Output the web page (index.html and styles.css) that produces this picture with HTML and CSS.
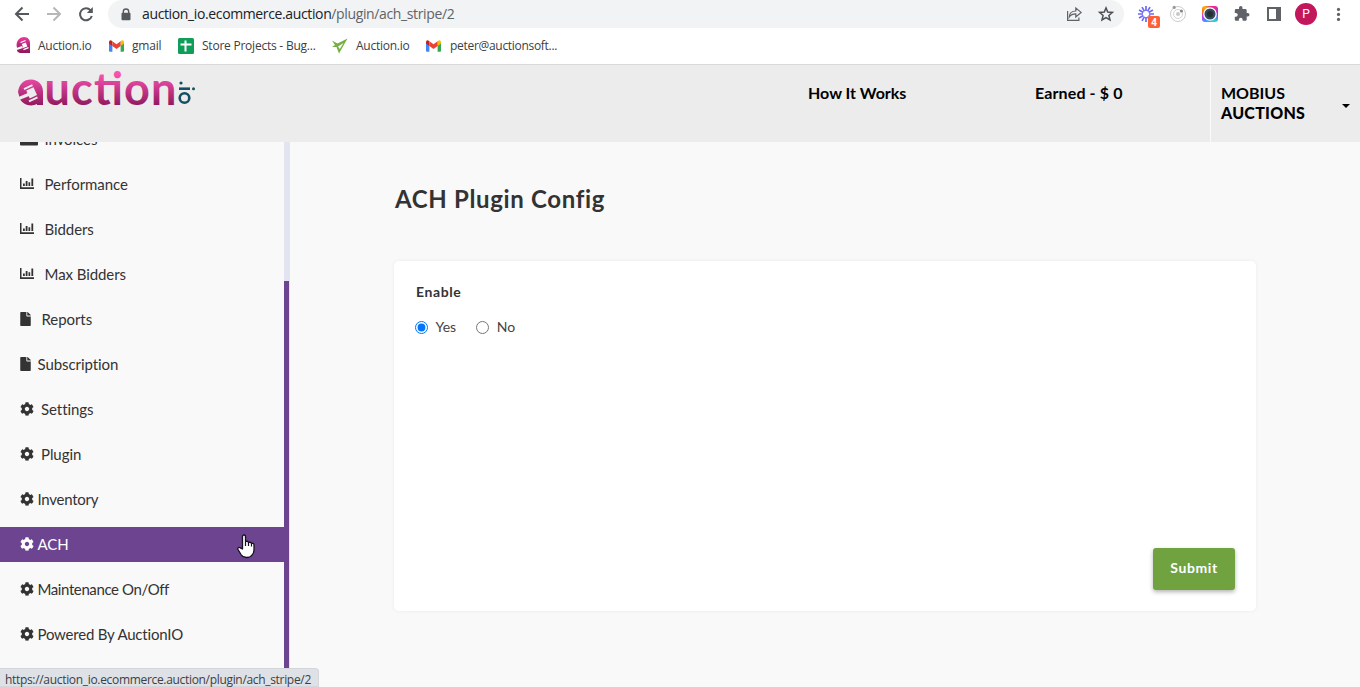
FILE: index.html
```html
<!DOCTYPE html>
<html lang="en">
<head>
<meta charset="utf-8">
<title>ACH Plugin Config</title>
<link rel="stylesheet" href="styles.css">
</head>
<body>
<svg class="defs" width="0" height="0" aria-hidden="true">
  <defs>
    <linearGradient id="pink" gradientUnits="userSpaceOnUse" x1="0" y1="2" x2="0" y2="36"><stop offset="0" stop-color="#f953b0"/><stop offset="1" stop-color="#891458"/></linearGradient>
    <linearGradient id="badge" x1="0" y1="0" x2="0" y2="1"><stop offset="0" stop-color="#e83b98"/><stop offset="1" stop-color="#8c175c"/></linearGradient>
    <symbol id="gear" viewBox="0 0 512 512"><path fill="currentColor" d="M487.4 315.7l-42.6-24.6c4.3-23.2 4.3-47 0-70.2l42.6-24.6c4.9-2.8 7.1-8.6 5.5-14-11.1-35.6-30-67.8-54.7-94.6-3.8-4.1-10-5.1-14.8-2.3L380.8 110c-17.900-15.400-38.500-27.300-60.800-35.100V25.800c0-5.600-3.900-10.500-9.400-11.700-36.700-8.200-74.300-7.800-109.200 0-5.500 1.200-9.400 6.100-9.400 11.700V75c-22.200 7.900-42.800 19.800-60.800 35.100L88.700 85.500c-4.900-2.800-11-1.900-14.800 2.300-24.700 26.700-43.600 58.900-54.700 94.600-1.700 5.400.6 11.200 5.500 14L67.300 221c-4.300 23.200-4.300 47 0 70.200l-42.600 24.600c-4.900 2.800-7.100 8.600-5.500 14 11.100 35.600 30 67.800 54.700 94.600 3.800 4.100 10 5.100 14.800 2.300l42.600-24.600c17.900 15.400 38.500 27.300 60.800 35.100v49.200c0 5.600 3.900 10.500 9.400 11.700 36.700 8.200 74.300 7.800 109.200 0 5.500-1.200 9.400-6.100 9.400-11.700v-49.200c22.200-7.900 42.800-19.800 60.800-35.100l42.600 24.600c4.900 2.800 11 1.900 14.800-2.300 24.700-26.700 43.600-58.900 54.700-94.600 1.500-5.500-.7-11.300-5.600-14.100zM256 336c-44.100 0-80-35.900-80-80s35.900-80 80-80 80 35.900 80 80-35.900 80-80 80z"/></symbol>
    <symbol id="chart" viewBox="0 0 14 11"><path fill="currentColor" d="M0 0h1.500v9.300H14V11H0zM3 5.500h1.800v2.500H3zM5.700 3h1.800v5H5.700zM8.500 4.200h1.700V8H8.500zM11.400 .6h1.800V8h-1.800z"/></symbol>
    <symbol id="file" viewBox="0 0 384 512"><path fill="currentColor" d="M224 136V0H24C10.700 0 0 10.700 0 24v464c0 13.300 10.700 24 24 24h336c13.300 0 24-10.700 24-24V160H248c-13.200 0-24-10.800-24-24zm160-14.100v6.100H256V0h6.100c6.400 0 12.500 2.500 17 7l97.900 98c4.500 4.500 7 10.600 7 16.900z"/></symbol>
    <symbol id="gmail" viewBox="0 0 16 12"><path fill="#4285f4" d="M0 1.500V11q0 1 1 1h2.600V5z"/><path fill="#34a853" d="M12.400 5v7H15q1 0 1-1V1.500z"/><path fill="#fbbc04" d="M12.400.9v5L16 3.200V1.800Q15.700-.7 13.500.1z"/><path fill="#c5221f" d="M3.600.9v5L0 3.200V1.800Q.3-.7 2.500.1z"/><path fill="#ea4335" d="M3.600 5.900v-5L8 4.200 12.400.9v5L8 9.200z"/></symbol>
  </defs>
</svg>

<div class="browser">
  <div class="toolbar">
    <div class="nav">
      <svg width="32" height="28" fill="none" stroke="#55585c" stroke-width="2"><path d="M29 14H16.500M22.500 7.500 16 14l6.500 6.500"/></svg>
      <svg width="32" height="28" fill="none" stroke="#b5b7b9" stroke-width="2"><path d="M8 14h12.500M14.500 7.500 21 14l-6.500 6.500"/></svg>
      <svg width="32" height="28" fill="none" stroke="#55585c" stroke-width="2"><path d="M19.600 10.300A6 6 0 1 0 20.800 16"/><path d="M21.800 7v6h-6z" fill="#55585c" stroke="none"/></svg>
    </div>
    <div class="omnibox">
      <svg class="lock" width="10" height="13"><path d="M2.300 5V3.700a2.700 2.700 0 0 1 5.400 0V5" fill="none" stroke="#55585c" stroke-width="1.400"/><rect x=".5" y="4.800" width="9" height="7.500" rx="1" fill="#55585c"/></svg>
      <div class="url">auction_io.ecommerce.auction<span>/plugin/ach_stripe/2</span></div>
      <svg width="32" height="28" fill="none" stroke="#5f6368" stroke-width="1.200"><path d="M9.600 11v9.400h11.300v-3M11.300 17c.2-4 2.600-6 6.500-6V8l5.300 4.400-5.300 4.500v-3c-3 0-5 .8-6.500 3.100z"/></svg>
      <svg width="32" height="28" fill="none" stroke="#4d5156" stroke-width="1.500"><path d="m16 7.900 1.700 4.100 4.700.4-3.500 3 1.100 4.500-4-2.400-4 2.400 1.100-4.500-3.500-3 4.700-.4z"/></svg>
    </div>
    <div class="extensions">
      <svg width="32" height="28"><g stroke="#6d68f2" stroke-width="1.700"><path d="M16 6v5M16 17v5M8 14h5M19 14h5M12 7.070l2.500 4.330M17.500 16.600l2.500 4.330M9.070 10l4.330 2.500M18.600 15.500l4.330 2.500M9.070 18l4.330-2.500M18.600 12.500l4.330-2.500M12 20.930l2.500-4.330M17.500 11.400 20 7.070"/></g><rect x="18" y="16" width="12" height="12" rx="2" fill="#ff6038"/><text class="count" x="24" y="26">4</text></svg>
      <svg width="32" height="28" fill="none"><circle cx="16" cy="14" r="7.500" stroke="#ccc"/><circle cx="16" cy="14" r="4.500" stroke="#d3d3d3"/><circle cx="16" cy="14" r="2" fill="#c8c8c8"/><circle cx="19.400" cy="11" r="1.600" fill="#888"/><circle cx="12.200" cy="7.400" r="1.600" fill="#999"/></svg>
      <div class="cell"><div class="camera"><svg width="16" height="16"><circle cx="8" cy="8" r="6.200" fill="#34495a" stroke="#fff" stroke-width="1.300"/><circle cx="8" cy="8" r="3" fill="#222e39"/></svg></div></div>
      <svg width="32" height="28"><path transform="translate(7.400 5.400) scale(.7)" fill="#5f6368" d="M20.500 11H19V7c0-1.100-.9-2-2-2h-4V3.500a2.500 2.500 0 0 0-5 0V5H4c-1.100 0-2 .9-2 2v3.800h1.500a2.700 2.700 0 0 1 0 5.400H2V20c0 1.100.9 2 2 2h3.800v-1.500a2.700 2.700 0 0 1 5.400 0V22H17c1.100 0 2-.9 2-2v-4h1.500a2.500 2.500 0 0 0 0-5z"/></svg>
      <svg width="32" height="28"><path fill="#5f6368" fill-rule="evenodd" d="M9 7h14v14H9zM11 9v10h7V9z"/></svg>
      <div class="cell"><div class="avatar">P</div></div>
      <svg width="32" height="28" fill="#5f6368"><circle cx="16.500" cy="9.400" r="1.600"/><circle cx="16.500" cy="14.400" r="1.600"/><circle cx="16.500" cy="19.400" r="1.600"/></svg>
    </div>
  </div>
  <div class="bookmarks">
    <div class="bm bm-a"><svg width="16" height="17"><path d="M2 11C0 3 6 0 9 0c4 0 6 3 6 6v10H5q-4-1-3-5z" fill="url(#badge)"/><path d="m0 11.500 7-2.500 1 2-7 2.200z" fill="#fff"/><path d="m5.500 5.500 5-2M8.500 12.700l5-2" stroke="#fff" stroke-width="1.300"/><path d="m6.800 7 4-1.600 1.500 4-4 1.600z" fill="#fff"/></svg><span>Auction.io</span></div>
    <div class="bm bm-b"><svg width="15" height="12"><use href="#gmail"/></svg><span>gmail</span></div>
    <div class="bm bm-c"><svg width="16" height="16"><rect width="16" height="16" rx="1.500" fill="#0f9d58"/><path d="M7.500 2.500v11M2.500 6.500h11" stroke="#fff" stroke-width="2"/></svg><span>Store Projects - Bug...</span></div>
    <div class="bm bm-d"><svg width="16" height="16"><path d="m0 2.500 5.500 3L15.500.5 7 15.500 4.500 9 0 9l3-2z" fill="#76b043"/><path d="m6 8.500 5.500-3.500L7.800 11z" fill="#fff"/></svg><span>Auction.io</span></div>
    <div class="bm bm-e"><svg width="15" height="12"><use href="#gmail"/></svg><span>peter@auctionsoft...</span></div>
  </div>
</div>

<header class="site-header">
  <svg class="logo" width="182" height="40" role="img" aria-label="auction.io">
    <path fill="url(#pink)" d="M2 20C3 12 8 7.500 15 7.500c7 0 12 5 12 12V33h-6v-1c-6 3-14 1-17-5z"/>
    <path fill="#ececec" d="M-1 26.500 13.500 20.200l1.500 3L2 28.500z"/>
    <path stroke="#ececec" stroke-width="1.900" d="m8 17.200 8.500-4M13 29.300l8.500-4"/>
    <path fill="#ececec" d="m10.300 18.600 7.200-3.400 3.500 7.800-7.200 3.400z"/>
    <text class="wordmark" x="28.500" y="32.500" textLength="132" fill="url(#pink)">uction</text>
    <g fill="none" stroke="#154f63" stroke-width="2.600"><circle cx="168.500" cy="26" r="4.800"/><path d="M163 16.700h11"/></g><circle cx="165" cy="11" r="1.600" fill="#154f63"/><circle cx="177.500" cy="16.700" r="1.500" fill="#154f63"/>
  </svg>
  <nav class="links"><a class="how">How It Works</a><a class="earned">Earned - $ 0</a></nav>
  <div class="account"><span>MOBIUS<br><b class="auc">AUCTIONS</b></span><i class="caret"></i></div>
</header>

<div class="layout">
  <aside class="sidebar">
    <ul class="menu">
      <li class="wide"><svg width="18" height="14"><path fill="#333" d="M0 0h18v12.500q0 1-1 1H1q-1 0-1-1z"/></svg><span>Invoices</span></li>
      <li class="bars"><svg width="14" height="11"><use href="#chart"/></svg><span>Performance</span></li>
      <li class="bars"><svg width="14" height="11"><use href="#chart"/></svg><span>Bidders</span></li>
      <li class="bars"><svg width="14" height="11"><use href="#chart"/></svg><span>Max Bidders</span></li>
      <li class="doc"><svg width="11" height="14"><use href="#file"/></svg><span>Reports</span></li>
      <li class="doc-tight"><svg width="11" height="14"><use href="#file"/></svg><span>Subscription</span></li>
      <li class="cog-wide"><svg width="14" height="14"><use href="#gear"/></svg><span>Settings</span></li>
      <li class="cog-wide"><svg width="14" height="14"><use href="#gear"/></svg><span>Plugin</span></li>
      <li><svg width="14" height="14"><use href="#gear"/></svg><span class="inventory">Inventory</span></li>
      <li class="active"><svg width="14" height="14"><use href="#gear"/></svg><span>ACH</span></li>
      <li><svg width="14" height="14"><use href="#gear"/></svg><span class="maintenance">Maintenance On/Off</span></li>
      <li><svg width="14" height="14"><use href="#gear"/></svg><span class="powered">Powered By AuctionIO</span></li>
    </ul>
    <div class="track"><div class="thumb"></div></div>
  </aside>
  <main>
    <h1>ACH Plugin Config</h1>
    <section class="card">
      <div class="label">Enable</div>
      <div class="options">
        <label><input type="radio" name="enable" checked><span>Yes</span></label>
        <label><input type="radio" name="enable"><span>No</span></label>
      </div>
      <button class="submit">Submit</button>
    </section>
  </main>
</div>
<svg class="pointer" width="19" height="25" viewBox="0 0 19 25"><path fill="#fff" stroke="#15101d" stroke-width="1.300" stroke-linejoin="round" d="M5.500 15V2.500q0-1.500 1.500-1.500t1.500 1.500v5q2.500-.8 3 1 2.300-.8 3 .8 2.500-.4 2.500 1.700v5q0 3-2 5-1.600 2.500-5.500 2.500-3.500 0-5.500-3L1 15.500q-.6-1.500.8-2 1-.3 2 .7z"/><path stroke="#15101d" stroke-width="1.200" d="M8.500 8v4M11.500 8.500V12M14.500 9.500v3"/></svg>
<div class="status">https://auction_io.ecommerce.auction/plugin/ach_stripe/2</div>
</body>
</html>
```
FILE: styles.css
```css
* { box-sizing: border-box; }
body { margin: 0; height: 687px; overflow: hidden; background: #f9f9f9; font-family: Lato, "Liberation Sans", sans-serif; font-variant-ligatures: none; color: #333; }
svg { display: block; flex: none; }
.defs { position: absolute; }
.browser { height: 65px; background: #fff; border-bottom: 1px solid #d8d9db; font-family: "Open Sans", "Noto Sans", sans-serif; }
.toolbar { display: flex; height: 28px; }
.nav { display: flex; width: 108px; }
.nav svg:nth-child(2) { margin-left: 7px; }
.omnibox { display: flex; width: 1016px; height: 28px; padding-right: 2px; border-radius: 14px; background: #f1f3f4; }
.lock { margin: 8px 11px 0 13px; }
.url { flex: 1; font-size: 14px; line-height: 28px; color: #202124; letter-spacing: -.37px; }
.url span { color: #5f6368; }
.extensions { display: flex; margin-left: 6px; }
.count { font: bold 10px "Open Sans", sans-serif; fill: #fff; text-anchor: middle; }
.cell { display: flex; width: 32px; height: 28px; align-items: center; justify-content: center; }
.camera { width: 16px; height: 16px; border-radius: 3px; background: conic-gradient(#f0298a, #f0298a 8%, #8b38f0 25%, #28d8d0 40%, #389bff 58%, #c43cf0 70%, #ff7d0a 82%, #f5b50a 90%, #f0298a); }
.avatar { width: 22px; height: 22px; border-radius: 50%; background: #c2185b; color: #fff; font: 12px/22px Roboto, sans-serif; text-align: center; }
.bookmarks { display: flex; height: 35px; padding-left: 15px; font-size: 12px; color: #3c4043; }
.bm { display: flex; height: 35px; align-items: center; white-space: nowrap; }
.bm span { margin-top: -1px; }
.bm-a { width: 94px; gap: 7px; letter-spacing: -.25px; }
.bm-b { width: 69px; gap: 8px; letter-spacing: -.2px; }
.bm-c { width: 154px; gap: 8px; letter-spacing: -.23px; }
.bm-d { width: 94px; gap: 8px; letter-spacing: -.25px; }
.bm-e { gap: 9px; letter-spacing: -.3px; }

.site-header { display: flex; height: 77px; background: #ececec; color: #000; font-size: 16px; font-weight: 700; }
.logo { margin: 7px 0 0 16px; overflow: visible; }
.wordmark { font: 700 45px Lato, sans-serif; }
.links { display: flex; flex: 1; padding: 18px 0 0 610px; line-height: 20px; white-space: nowrap; }
.how { width: 227px; }
.earned { letter-spacing: .12px; }
.account { display: flex; width: 150px; padding: 18px 10px 0; border-left: 1px solid #fafafa; line-height: 20px; justify-content: space-between; }
.auc { letter-spacing: .25px; }
.caret { margin: 21px 0 0; width: 0; height: 0; border: 4px solid transparent; border-top-color: #000; border-bottom: 0; }

.layout { display: flex; height: 545px; }
.sidebar { display: flex; width: 290px; overflow: hidden; }
.menu { width: 284px; margin: -20px 0 0; padding: 0; list-style: none; font-size: 15px; letter-spacing: -.07px; }
.menu li { display: flex; height: 35px; margin-bottom: 10px; padding: 0 0 2px 19.5px; gap: 4px; align-items: center; white-space: nowrap; }
.menu .wide { gap: 7px; }
.menu .bars { gap: 11px; }
.menu .doc { gap: 11px; }
.menu .doc-tight { gap: 7px; }
.menu .cog-wide { gap: 7.500px; }
.inventory { letter-spacing: -.25px; }
.maintenance { letter-spacing: -.4px; }
.powered { letter-spacing: -.2px; }
.menu .active { background: #6c448f; color: #fff; }
.track { width: 6px; background: #e2e5ef; }
.thumb { width: 5px; height: 406px; margin-top: 139px; background: #6c448f; }
main { width: 966px; padding: 42px 0 0 104px; }
h1 { height: 30px; margin: 0 0 47px; padding-left: 1px; font-size: 24px; line-height: 30px; letter-spacing: .65px; }
.card { display: flex; width: 862px; height: 350px; padding: 21px; flex-direction: column; border-radius: 5px; background: #fff; box-shadow: 0 0 4px rgba(0,0,0,.06); }
.label { padding-left: 1px; font-size: 14px; font-weight: 700; line-height: 20px; letter-spacing: .6px; }
.options { display: flex; margin-top: 15px; gap: 20px; font-size: 14px; line-height: 20px; color: #444; }
.options label { display: flex; align-items: center; }
.options input { width: 13px; height: 13px; margin: 0 7.500px 0 0; }
.submit { width: 82px; height: 42px; margin: auto 0 0 auto; padding: 0 0 3px; border: 0; border-radius: 3px; background: #70a240; box-shadow: 0 2px 4px rgba(0,0,0,.3); color: #fff; font: 700 14px Lato, sans-serif; letter-spacing: .6px; }
.pointer { position: absolute; left: 237px; top: 534px; }
.status { position: absolute; left: 0; top: 668px; width: 319px; height: 19px; padding-left: 5px; border: 1px solid #d3d6da; border-left: 0; border-radius: 0 4px 0 0; background: #dee1e6; font: 12px/22px "Open Sans", sans-serif; color: #3c4043; white-space: nowrap; letter-spacing: -.32px; }
```
